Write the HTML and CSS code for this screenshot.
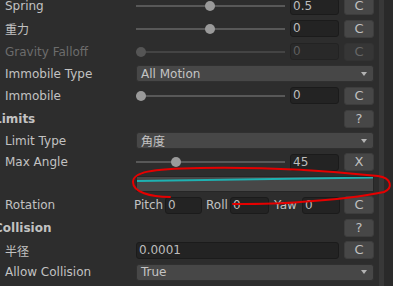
FILE: index.html
```html
<!DOCTYPE html>
<html>
<head>
<meta charset="utf-8">
<link rel="stylesheet" href="styles.css">
</head>
<body>
<div class="inspector">
  <div class="panel">
    <div class="row h22">
      <span class="label">Spring</span>
      <div class="controls">
        <div class="slider"><div class="track"></div><div class="thumb" style="left:69px"></div></div>
        <div class="field">0.5</div>
        <div class="btn">C</div>
      </div>
    </div>
    <div class="row h23">
      <span class="label cjk">重力</span>
      <div class="controls">
        <div class="slider"><div class="track"></div><div class="thumb" style="left:69px"></div></div>
        <div class="field">0</div>
        <div class="btn">C</div>
      </div>
    </div>
    <div class="row h23 disabled">
      <span class="label">Gravity Falloff</span>
      <div class="controls">
        <div class="slider"><div class="track"></div><div class="thumb" style="left:0px"></div></div>
        <div class="field">0</div>
        <div class="btn">C</div>
      </div>
    </div>
    <div class="row h21">
      <span class="label">Immobile Type</span>
      <div class="controls">
        <div class="dropdown"><span>All Motion</span><span class="arrow"></span></div>
      </div>
    </div>
    <div class="row h23">
      <span class="label">Immobile</span>
      <div class="controls">
        <div class="slider"><div class="track"></div><div class="thumb" style="left:0px"></div></div>
        <div class="field">0</div>
        <div class="btn">C</div>
      </div>
    </div>
    <div class="row h23 header">
      <span class="label">Limits</span>
      <div class="controls end">
        <div class="btn">?</div>
      </div>
    </div>
    <div class="row h21">
      <span class="label">Limit Type</span>
      <div class="controls">
        <div class="dropdown"><span class="cjk">角度</span><span class="arrow"></span></div>
      </div>
    </div>
    <div class="row h22">
      <span class="label">Max Angle</span>
      <div class="controls">
        <div class="slider"><div class="track"></div><div class="thumb" style="left:35px"></div></div>
        <div class="field">45</div>
        <div class="btn">X</div>
      </div>
    </div>
    <div class="row h21">
      <span class="label"></span>
      <div class="controls">
        <div class="curve">
          <svg width="238" height="14" viewBox="0 0 238 14"><line x1="0" y1="4" x2="238" y2="0.5" stroke="#1eb2b2" stroke-width="2"/></svg>
        </div>
      </div>
    </div>
    <div class="row h22">
      <span class="label">Rotation</span>
      <div class="controls rot">
        <span class="sub pitch">Pitch</span>
        <div class="field w37">0</div>
        <span class="sub roll">Roll</span>
        <div class="field w39">0</div>
        <span class="sub yaw">Yaw</span>
        <div class="field w38">0</div>
        <div class="btn">C</div>
      </div>
    </div>
    <div class="row h23 header">
      <span class="label">Collision</span>
      <div class="controls end">
        <div class="btn">?</div>
      </div>
    </div>
    <div class="row h22">
      <span class="label cjk">半径</span>
      <div class="controls">
        <div class="field wide">0.0001</div>
        <div class="btn">C</div>
      </div>
    </div>
    <div class="row h22">
      <span class="label">Allow Collision</span>
      <div class="controls">
        <div class="dropdown"><span>True</span><span class="arrow"></span></div>
      </div>
    </div>
  </div>
  <div class="edge"></div>
  <div class="gutter"></div>
</div>
<svg class="annotation" width="393" height="286" viewBox="0 0 393 286">
  <path d="M 170 197 C 150 197, 133 192, 133 182 C 133 172, 150 169, 200 168 C 260 167, 330 171, 378 176 C 392 178, 393 188, 384 192 C 365 196, 330 200, 300 202 C 280 204, 260 204, 233 204" fill="none" stroke="#e60000" stroke-width="2" stroke-linecap="round"/>
</svg>
</body>
</html>
```
FILE: styles.css
```css
html, body {
  margin: 0;
  padding: 0;
  background: #2d2d2d;
  overflow: hidden;
}
body {
  width: 393px;
  height: 286px;
  position: relative;
  font-family: "DejaVu Sans", "Noto Sans CJK JP", sans-serif;
  font-size: 12px;
  color: #c2c2c2;
}
.inspector {
  display: flex;
  height: 286px;
}
.panel {
  width: 379px;
  margin-top: -5px;
  display: flex;
  flex-direction: column;
  background: #2d2d2d;
}
.edge {
  width: 5px;
  background: #383838;
}
.gutter {
  width: 9px;
  background: #2a2a2a;
}
.row {
  display: flex;
  align-items: center;
  flex: none;
}
.h21 { height: 21px; }
.h22 { height: 22px; }
.h23 { height: 23px; }
.label {
  width: 131px;
  padding-left: 5px;
  white-space: nowrap;
  flex: none;
}
.cjk {
  font-family: "Noto Sans CJK JP", "DejaVu Sans", sans-serif;
  font-size: 12px;
}
.header .label {
  margin-left: -11px;
  padding-left: 5px;
  width: 142px;
  font-weight: bold;
}
.disabled { color: #6c6c6c; }
.controls {
  width: 238px;
  display: flex;
  align-items: center;
  gap: 5px;
}
.controls.end { justify-content: flex-end; }
.slider {
  position: relative;
  width: 149px;
  height: 12px;
  flex: none;
}
.track {
  position: absolute;
  left: 0;
  right: 0;
  top: 5px;
  height: 2px;
  background: #585858;
}
.thumb {
  position: absolute;
  top: 1px;
  width: 10px;
  height: 10px;
  border-radius: 50%;
  background: #9a9a9a;
}
.disabled .thumb { background: #555; }
.disabled .track { background: #444; }
.field {
  box-sizing: border-box;
  width: 49px;
  height: 17px;
  background: #232323;
  border: 1px solid #1b1b1b;
  border-radius: 3px;
  padding-left: 2px;
  line-height: 15px;
  color: #bdbdbd;
  flex: none;
}
.disabled .field {
  background: #292929;
  border-color: #232323;
  color: #5e5e5e;
}
.field.wide { width: 203px; }
.btn {
  box-sizing: border-box;
  width: 30px;
  height: 18px;
  background: #474747;
  border: 1px solid #3d3d3d;
  border-radius: 3px;
  text-align: center;
  line-height: 16px;
  font-size: 13px;
  color: #c0c0c0;
  flex: none;
}
.disabled .btn {
  background: #363636;
  border-color: #333;
  color: #666;
}
.dropdown {
  box-sizing: border-box;
  width: 238px;
  height: 17px;
  background: #474747;
  border: 1px solid #303030;
  border-radius: 3px;
  display: flex;
  align-items: center;
  justify-content: space-between;
  padding: 0 6px 0 4px;
  color: #c4c4c4;
}
.arrow {
  width: 0;
  height: 0;
  border-left: 3.5px solid transparent;
  border-right: 3.5px solid transparent;
  border-top: 4px solid #b4b4b4;
}
.curve {
  box-sizing: border-box;
  width: 238px;
  height: 16px;
  background: #474747;
  border: 1px solid #262626;
  display: flex;
}
.curve svg { display: block; }
.controls.rot {
  gap: 0;
  margin-left: -2px;
  width: 240px;
}
.sub { flex: none; white-space: nowrap; }
.pitch { width: 31px; }
.roll { width: 24px; padding-left: 4px; }
.yaw { width: 28px; padding-left: 5px; }
.w37 { width: 37px; }
.w39 { width: 39px; }
.w38 { width: 38px; margin-right: 4px; }
.annotation {
  position: absolute;
  left: 0;
  top: 0;
  pointer-events: none;
}
```
